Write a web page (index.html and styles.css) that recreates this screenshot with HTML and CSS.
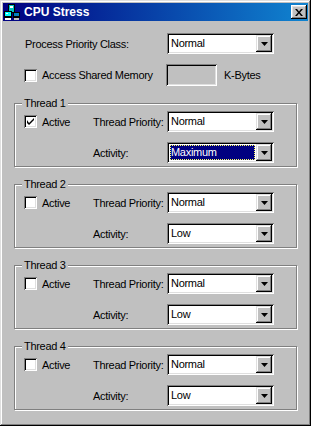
FILE: index.html
```html
<!DOCTYPE html>
<html lang="en">
<head>
    <meta charset="UTF-8">
    <title>CPU Stress</title>
    <link rel="stylesheet" href="styles.css">
</head>
<body>
    <div class="window">
        <div class="titlebar">
            <svg class="app-icon" width="16" height="16" viewBox="0 0 16 16">
                <rect x="4" y="0" width="7" height="9" fill="#000"/>
                <rect x="5" y="1" width="5" height="7" fill="#00c0c0"/>
                <rect x="6" y="2" width="3" height="2" fill="#fff"/>
                <rect x="0" y="7" width="8" height="7" fill="#000"/>
                <rect x="1" y="8" width="6" height="4" fill="#00ffff"/>
                <rect x="2" y="9" width="2" height="1" fill="#fff"/>
                <rect x="9" y="8" width="7" height="6" fill="#000"/>
                <rect x="10" y="9" width="5" height="3" fill="#0080c0"/>
                <rect x="1" y="14" width="6" height="2" fill="#fff"/>
                <rect x="10" y="14" width="5" height="2" fill="#c0c0c0"/>
            </svg>
            <span class="title">CPU Stress</span>
            <button class="close-btn">
                <svg width="8" height="7" viewBox="0 0 8 7"><path d="M0 0H2L4 2.5L6 0H8L5 3.5L8 7H6L4 4.5L2 7H0L3 3.5Z" fill="#000"/></svg>
            </button>
        </div>

        <div class="client">
            <div class="row priority-row">
                <span class="row-label">Process Priority Class:</span>
                <div class="combo">
                    <span class="value">Normal</span>
                    <span class="drop"><svg width="7" height="4" viewBox="0 0 7 4"><path d="M0 0H7L3.5 4Z" fill="#000"/></svg></span>
                </div>
            </div>

            <div class="row memory-row">
                <label class="check-label memory-check">
                    <span class="check"></span>
                    <span>Access Shared Memory</span>
                </label>
                <div class="edit"></div>
                <span class="unit">K-Bytes</span>
            </div>

            <div id="groups" class="groups"></div>
        </div>
    </div>

    <script>
        const threads = [
            { name: 'Thread 1', active: true, priority: 'Normal', activity: 'Maximum', focused: true },
            { name: 'Thread 2', active: false, priority: 'Normal', activity: 'Low' },
            { name: 'Thread 3', active: false, priority: 'Normal', activity: 'Low' },
            { name: 'Thread 4', active: false, priority: 'Normal', activity: 'Low' }
        ];

        const arrow = '<span class="drop"><svg width="7" height="4" viewBox="0 0 7 4"><path d="M0 0H7L3.5 4Z" fill="#000"/></svg></span>';
        const tick = '<svg width="7" height="7" viewBox="0 0 7 7"><path d="M0 2V5L2 7L7 2V0L2 5Z" fill="#000"/></svg>';

        let html = '';
        threads.forEach(t => {
            html += '<div class="group">';
            html += `<span class="group-title">${t.name}</span>`;
            html += `<label class="check-label"><span class="check">${t.active ? tick : ''}</span><span>Active</span></label>`;
            html += '<span class="field-label">Thread Priority:</span>';
            html += `<div class="combo"><span class="value">${t.priority}</span>${arrow}</div>`;
            html += '<span class="field-label activity-label">Activity:</span>';
            html += `<div class="combo activity-combo"><span class="value${t.focused ? ' selected' : ''}">${t.activity}</span>${arrow}</div>`;
            html += '</div>';
        });
        document.getElementById('groups').innerHTML = html;
    </script>
</body>
</html>
```

FILE: styles.css
```css
:root {
    --face: #c0c0c0;
    --shadow: #808080;
    --light: #dfdfdf;
    --navy: #000080;
}

body {
    margin: 0;
    font-family: 'Liberation Sans', Arial, sans-serif;
    font-size: 11px;
    letter-spacing: -0.3px;
    white-space: nowrap;
    color: #000;
    background: var(--face);
}

.window {
    width: 311px;
    height: 426px;
    box-sizing: border-box;
    padding: 3px;
    background: var(--face);
    box-shadow: inset -1px -1px #000, inset 1px 1px var(--light), inset -2px -2px var(--shadow), inset 2px 2px #fff;
}

.titlebar {
    height: 18px;
    display: flex;
    align-items: center;
    background: linear-gradient(to right, var(--navy), #1084d0);
    color: #fff;
}

.app-icon {
    margin-left: 1px;
    margin-right: 4px;
}

.title {
    flex: 1;
    font-weight: bold;
    font-size: 12px;
    letter-spacing: 0;
}

.close-btn {
    width: 16px;
    height: 14px;
    margin-right: 1px;
    padding: 0;
    border: none;
    display: flex;
    align-items: center;
    justify-content: center;
    background: var(--face);
    box-shadow: inset -1px -1px #000, inset 1px 1px #fff, inset -2px -2px var(--shadow), inset 2px 2px var(--light);
}

.client {
    padding: 12px 0 0 11px;
}

.row {
    display: flex;
    align-items: center;
    padding-left: 10px;
}

.row-label {
    width: 142px;
    padding-left: 1px;
}

.memory-row {
    margin-top: 10px;
    height: 22px;
}

.memory-check {
    width: 142px;
}

.edit {
    width: 51px;
    height: 22px;
    box-sizing: border-box;
    background: var(--face);
    box-shadow: inset 1px 1px var(--shadow), inset -1px -1px #fff, inset 2px 2px #000, inset -2px -2px var(--light);
}

.unit {
    margin-left: 7px;
}

.check-label {
    display: flex;
    align-items: center;
    gap: 5px;
}

.check {
    width: 13px;
    height: 13px;
    box-sizing: border-box;
    display: flex;
    align-items: center;
    justify-content: center;
    background: #fff;
    box-shadow: inset 1px 1px var(--shadow), inset -1px -1px #fff, inset 2px 2px #000, inset -2px -2px var(--light);
}

.combo {
    width: 107px;
    height: 21px;
    box-sizing: border-box;
    padding: 2px;
    display: flex;
    background: #fff;
    box-shadow: inset 1px 1px var(--shadow), inset -1px -1px #fff, inset 2px 2px #000, inset -2px -2px var(--light);
}

.value {
    flex: 1;
    padding-left: 2px;
    line-height: 17px;
}

.value.selected {
    margin: 1px;
    padding-left: 1px;
    line-height: 15px;
    background: var(--navy);
    color: #fff;
    outline: 1px dotted #ffff60;
    outline-offset: -1px;
}

.drop {
    width: 16px;
    height: 17px;
    display: flex;
    align-items: center;
    justify-content: center;
    background: var(--face);
    box-shadow: inset -1px -1px #000, inset 1px 1px var(--light), inset -2px -2px var(--shadow), inset 2px 2px #fff;
}

.groups {
    margin-top: 17px;
    display: flex;
    flex-direction: column;
    gap: 17px;
}

.group {
    position: relative;
    width: 283px;
    height: 64px;
    box-sizing: border-box;
    padding: 7px 0 0 9px;
    border: 1px solid var(--shadow);
    box-shadow: inset 1px 1px #fff, 1px 1px #fff;
    display: grid;
    grid-template-columns: 69px 74px 107px;
    grid-template-rows: 21px 21px;
    row-gap: 10px;
    align-items: center;
}

.group-title {
    position: absolute;
    top: -8px;
    left: 7px;
    padding: 0 2px;
    line-height: 14px;
    background: var(--face);
}

.activity-label {
    grid-column: 2;
}

.activity-combo {
    grid-column: 3;
}
```
